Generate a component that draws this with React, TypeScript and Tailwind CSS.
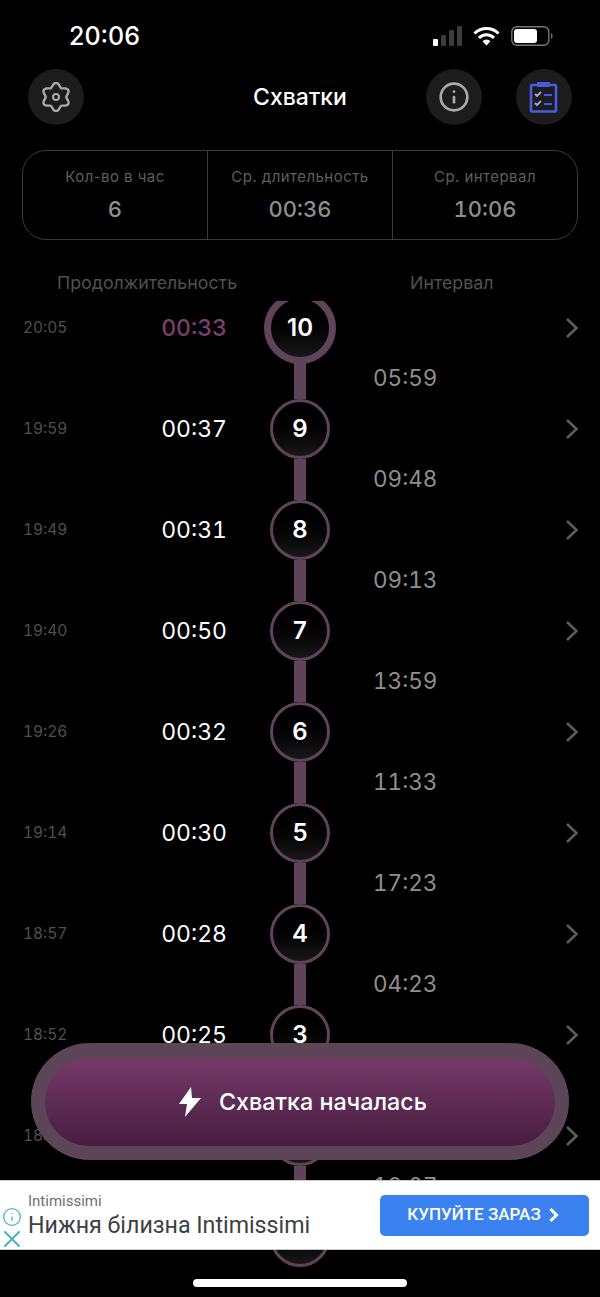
import { Info, X } from 'lucide-react';

const rows = [
  { n: '10', t: '20:05', d: '00:33', i: '05:59' },
  { n: '9', t: '19:59', d: '00:37', i: '09:48' },
  { n: '8', t: '19:49', d: '00:31', i: '09:13' },
  { n: '7', t: '19:40', d: '00:50', i: '13:59' },
  { n: '6', t: '19:26', d: '00:32', i: '11:33' },
  { n: '5', t: '19:14', d: '00:30', i: '17:23' },
  { n: '4', t: '18:57', d: '00:28', i: '04:23' },
  { n: '3', t: '18:52', d: '00:25', i: '' },
  { n: '', t: '18:47', d: '', i: '10:07' },
  { n: '', t: '', d: '', i: '' },
];

function Chevron() {
  return (
    <svg width="14" height="22" viewBox="0 0 14 22" fill="none" stroke="#5c5c5c" strokeWidth="2.6" className="mr-[21px]">
      <path d="M2 2l9.500 9L2 20" />
    </svg>
  );
}

function Row({ r, first, last }: { r: (typeof rows)[number]; first: boolean; last: boolean }) {
  return (
    <div>
      <div className="flex h-[60px] items-center">
        <div className="w-[107px] pl-[23px] text-[15.500px] tabular-nums text-[#4f4f4f]">{r.t}</div>
        <div className={`w-[120px] text-right text-[23px] leading-none tabular-nums ${first ? 'font-medium text-[#7b3f70]' : 'text-white'}`}>{r.d}</div>
        <div className="flex w-[146px] justify-center">
          <div
            className={`flex shrink-0 items-center justify-center rounded-full bg-gradient-to-b from-black to-[#181818] text-[24px] font-semibold text-white ${
              first ? 'h-[72px] w-[72px] border-[7px] border-[#5f4459]' : 'h-[60px] w-[60px] border-[3px] border-[#5f4459]'
            }`}
          >
            {r.n}
          </div>
        </div>
        <div className="flex-1" />
        <Chevron />
      </div>
      {!last && (
        <div className="flex h-[41px] items-center">
          <div className="w-[294px]" />
          <div className="h-full w-[12px] bg-[#5f4459]" />
          <div className="pl-[67px] text-[22.500px] leading-none tabular-nums text-[#8f8f8f]">{r.i}</div>
        </div>
      )}
    </div>
  );
}

function Stat({ label, value, border }: { label: string; value: string; border?: boolean }) {
  return (
    <div className={`flex flex-1 flex-col items-center pt-[16px] ${border ? 'border-l border-[#3a3a3a]' : ''}`}>
      <div className="text-[15px] leading-[20px] tracking-[0.45px] text-[#5e5e5e]">{label}</div>
      <div className="mt-[9px] text-[22px] font-medium leading-[26px] tabular-nums text-[#8e8e8e]">{value}</div>
    </div>
  );
}

function Gear() {
  const pts: string[] = [];
  for (let a = 0; a < 360; a += 5) {
    const rad = (a * Math.PI) / 180;
    const r = 12.2 + 1.9 * Math.cos(6 * rad);
    pts.push(`${(15 + r * Math.sin(rad)).toFixed(2)},${(15 - r * Math.cos(rad)).toFixed(2)}`);
  }
  return (
    <svg width="30" height="30" viewBox="0 0 30 30" fill="none" stroke="#a9a9a9" strokeWidth="2.4" strokeLinejoin="round">
      <polygon points={pts.join(' ')} />
      <circle cx="15" cy="15" r="3" strokeWidth="2" />
    </svg>
  );
}

function Clipboard() {
  return (
    <svg width="30" height="32" viewBox="0 0 30 32" fill="none" className="text-[#4a5be0]">
      <rect x="2" y="4" width="25" height="26.500" stroke="currentColor" strokeWidth="2.6" rx="1" />
      <rect x="8" y="1" width="13" height="5" fill="currentColor" rx="1" />
      <path d="M6 13l2 2 4-4M6 22l2 2 4-4" stroke="#9aa4f0" strokeWidth="1.8" />
      <path d="M15 14h8M15 23h8" stroke="currentColor" strokeWidth="2.2" />
    </svg>
  );
}

export default function App() {
  return (
    <div
      className="relative h-[1297px] w-[600px] overflow-hidden bg-black"
      style={{ fontFamily: 'Inter, "Noto Sans", sans-serif' }}
    >
      <div className="flex h-[69px] items-start justify-between pl-[69px] pr-[46px] pt-[20px]">
        <div className="text-[25px] font-medium leading-[32px] text-white">20:06</div>
        <div className="flex items-center gap-[10px] pt-[5px]">
          <svg width="31" height="22" viewBox="0 0 31 22">
            <rect x="1" y="14" width="5" height="7" rx="1" fill="#fff" />
            <rect x="9" y="10" width="5" height="11" rx="1" fill="#3c3c3c" />
            <rect x="17" y="5" width="5" height="16" rx="1" fill="#3c3c3c" />
            <rect x="25" y="1" width="5" height="20" rx="1" fill="#3c3c3c" />
          </svg>
          <svg width="27" height="20" viewBox="0 0 27 20" fill="none" stroke="#fff" strokeWidth="3">
            <path d="M1.500 7.500a17 17 0 0 1 24 0" />
            <path d="M6 12a10.500 10.500 0 0 1 15 0" />
            <path d="M13.500 19.500l-4-4.200a5.600 5.600 0 0 1 8 0z" fill="#fff" stroke="none" />
          </svg>
          <svg width="43" height="22" viewBox="0 0 43 22" className="ml-[1px]">
            <rect x="0.800" y="1.800" width="37" height="18.400" rx="5" fill="none" stroke="#777" strokeWidth="1.400" />
            <rect x="3" y="4" width="23" height="14" rx="3" fill="#fff" />
            <path d="M40 8c2 .5 2 5.500 0 6z" fill="#777" />
          </svg>
        </div>
      </div>

      <div className="grid h-[56px] grid-cols-[1fr_auto_1fr] items-center px-[28px]">
        <div className="flex">
          <div className="flex h-[56px] w-[56px] items-center justify-center rounded-full bg-[#1c1c1c]">
            <Gear />
          </div>
        </div>
        <div className="text-[23px] font-medium text-white">Схватки</div>
        <div className="flex justify-end gap-[34px]">
          <div className="flex h-[56px] w-[56px] items-center justify-center rounded-full bg-[#1c1c1c]">
            <Info className="h-[32px] w-[32px] text-[#a9a9a9]" strokeWidth={2} />
          </div>
          <div className="flex h-[56px] w-[56px] items-center justify-center rounded-full bg-[#1c1c1c]">
            <Clipboard />
          </div>
        </div>
      </div>

      <div className="mx-[22px] mt-[25px] flex h-[90px] rounded-[24px] border border-[#3a3a3a]">
        <Stat label="Кол-во в час" value="6" />
        <Stat label="Ср. длительность" value="00:36" border />
        <Stat label="Ср. интервал" value="10:06" border />
      </div>

      <div className="mt-[31px] flex h-[24px] items-center text-[17.800px] leading-[24px] text-[#505050]">
        <div className="w-[353px] pl-[57px]">Продолжительность</div>
        <div className="pl-[57px]">Интервал</div>
      </div>

      <div className="mt-[6px] h-[998px] overflow-hidden">
        <div className="-mt-[3px]">
          {rows.map((r, idx) => (
            <Row key={idx} r={r} first={idx === 0} last={idx === rows.length - 1} />
          ))}
        </div>
      </div>

      <div className="absolute left-[31px] top-[1043px] flex h-[117px] w-[538px] items-center justify-center rounded-full bg-[#5d4558] px-[14px]">
        <div className="flex h-[88px] w-full items-center justify-center gap-[17px] rounded-full bg-gradient-to-b from-[#763a69] to-[#471d40] pl-[5px]">
          <svg width="24" height="30" viewBox="0 0 24 30" fill="#fff">
            <path d="M13 0 1 17h8l-2 13L23 11h-9z" />
          </svg>
          <span className="pt-[2px] text-[23.300px] font-medium text-white">Схватка началась</span>
        </div>
      </div>

      <div className="absolute left-0 top-[1180px] flex h-[70px] w-[600px] items-center border-y border-[#c9c9c9] bg-white">
        <div className="flex w-[28px] flex-col items-center pr-[5px] pt-[30px] text-[#4db3c4]">
          <Info className="h-[20px] w-[20px] shrink-0" strokeWidth={1.6} />
          <X className="-mt-[2px] h-[28px] w-[28px] shrink-0" strokeWidth={1.8} />
        </div>
        <div className="flex-1 pt-[2px]" style={{ fontFamily: 'Roboto, sans-serif' }}>
          <div className="text-[15px] leading-[18px] text-[#6f6f6f]">Intimissimi</div>
          <div className="text-[23.200px] leading-[30px] text-[#3c4043]">Нижня білизна Intimissimi</div>
        </div>
        <div
          className="mr-[11px] flex h-[41px] w-[209px] items-center justify-center gap-[5px] rounded-[5px] bg-[#3b82f0] text-[17px] font-medium text-white"
          style={{ fontFamily: 'Roboto, sans-serif' }}
        >
          КУПУЙТЕ ЗАРАЗ
          <svg width="16" height="18" viewBox="0 0 16 18" fill="none" stroke="#fff" strokeWidth="3">
            <path d="M4.500 3l6 6-6 6" />
          </svg>
        </div>
      </div>

      <div className="absolute bottom-[10px] left-[193px] h-[8px] w-[214px] rounded-full bg-white" />
    </div>
  );
}
